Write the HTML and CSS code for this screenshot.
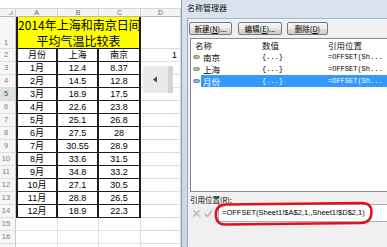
FILE: index.html
```html
<!DOCTYPE html>
<html>
<head>
<meta charset="utf-8">
<link rel="stylesheet" href="styles.css">
</head>
<body>
<div class="screen">
  <div class="sheet">
    <div class="topbar"></div>
    <div class="grid">
      <div class="corner"><span class="tri"></span></div>
      <div class="colh">A</div><div class="colh">B</div><div class="colh">C</div><div class="colh">D</div>

      <div class="rowh r1">1</div>
      <div class="title">2014年上海和南京日间<br>平均气温比较表</div>
      <div class="dcell"></div>

      <div class="rowh">2</div><div class="c a">月份</div><div class="c">上海</div><div class="c">南京</div><div class="dcell num">1</div>
      <div class="rowh">3</div><div class="c a">1月</div><div class="c">12.4</div><div class="c">8.37</div><div class="dcell"></div>
      <div class="rowh">4</div><div class="c a">2月</div><div class="c">14.5</div><div class="c">12.8</div><div class="dcell"></div>
      <div class="rowh act">5</div><div class="c a">3月</div><div class="c">18.9</div><div class="c">17.5</div><div class="dcell"></div>
      <div class="rowh">6</div><div class="c a">4月</div><div class="c">22.6</div><div class="c">23.8</div><div class="dcell"></div>
      <div class="rowh">7</div><div class="c a">5月</div><div class="c">25.1</div><div class="c">26.8</div><div class="dcell"></div>
      <div class="rowh">8</div><div class="c a">6月</div><div class="c">27.5</div><div class="c">28</div><div class="dcell"></div>
      <div class="rowh">9</div><div class="c a">7月</div><div class="c">30.55</div><div class="c">28.9</div><div class="dcell"></div>
      <div class="rowh">10</div><div class="c a">8月</div><div class="c">33.6</div><div class="c">31.5</div><div class="dcell"></div>
      <div class="rowh">11</div><div class="c a">9月</div><div class="c">34.8</div><div class="c">33.2</div><div class="dcell"></div>
      <div class="rowh">12</div><div class="c a">10月</div><div class="c">27.1</div><div class="c">30.5</div><div class="dcell"></div>
      <div class="rowh">13</div><div class="c a">11月</div><div class="c">28.8</div><div class="c">26.5</div><div class="dcell"></div>
      <div class="rowh">14</div><div class="c a">12月</div><div class="c">18.9</div><div class="c">22.3</div><div class="dcell"></div>
      <div class="rowh">15</div><div class="e"></div><div class="e"></div><div class="e"></div><div class="dcell"></div>
      <div class="rowh">16</div><div class="e"></div><div class="e"></div><div class="e"></div><div class="dcell"></div>
      <div class="rowh">17</div><div class="e"></div><div class="e"></div><div class="e"></div><div class="dcell"></div>
    </div>
    <div class="scrollbox">
      <svg width="6" height="7" viewBox="0 0 6 7"><path d="M5 0.5 L1 3.5 L5 6.5 Z" fill="#444"/></svg>
    </div>
  </div>

  <div class="dialog">
    <div class="titlebar">名称管理器</div>
    <div class="body">
      <div class="btns">
        <div class="btn b1">新建(<u>N</u>)...</div>
        <div class="btn b2">编辑(<u>E</u>)...</div>
        <div class="btn b3">删除(<u>D</u>)</div>
      </div>
      <div class="list">
        <div class="lhead"><span class="hn">名称</span><span class="hv">数值</span><span class="hr">引用位置</span></div>
        <div class="lrow"><span class="ic"><i></i></span><span class="cells"><span class="nm">南京</span><span class="val">{...}</span><span class="ref">=OFFSET(Sh...</span></span></div>
        <div class="lrow"><span class="ic"><i></i></span><span class="cells"><span class="nm">上海</span><span class="val">{...}</span><span class="ref">=OFFSET(Sh...</span></span></div>
        <div class="lrow sel"><span class="ic"><i></i></span><span class="cells"><span class="nm">月份</span><span class="val">{...}</span><span class="ref">=OFFSET(Sh...</span></span></div>
      </div>
      <div class="reflabel">引用位置(<u>R</u>):</div>
      <div class="refrow">
        <span class="ib">
          <svg width="11" height="11" viewBox="0 0 11 11"><path d="M2.5 2.5 L8.5 8.5 M8.5 2.5 L2.5 8.5" stroke="#b4b4b4" stroke-width="1.3" fill="none"/></svg>
        </span>
        <span class="ib">
          <svg width="11" height="11" viewBox="0 0 11 11"><path d="M2 6 L4.5 8.5 L9 2.5" stroke="#b4b4b4" stroke-width="1.3" fill="none"/></svg>
        </span>
        <div class="input">=OFFSET(Sheet1!$A$2,1,,Sheet1!$D$2,1)</div>
        <svg class="mark" width="162" height="26" viewBox="0 0 162 26"><path d="M12 3.5 L148 2 Q157.5 2 157.5 11 Q157.5 21.5 147 22 L11 23.5 Q1.8 23.5 1.8 13.5 Q1.8 4 12 3.5 Z" fill="none" stroke="#e0101c" stroke-width="2.4"/></svg>
      </div>
    </div>
  </div>
</div>
</body>
</html>
```
FILE: styles.css
```css
* { box-sizing: border-box; margin: 0; padding: 0; }
html, body { width: 387px; height: 247px; overflow: hidden; background: #fff; }
body { font-family: "Noto Sans CJK SC", sans-serif; color: #000; }

.screen { display: flex; height: 247px; }

/* spreadsheet */
.sheet { position: relative; width: 181px; flex: none; overflow: hidden; }
.topbar { height: 9px; border-bottom: 1px solid #d6d6d6; background: #fff; }
.grid {
  display: grid;
  grid-template-columns: 16px 42px 41px 42px 40px;
  grid-template-rows: 8px 32px;
  grid-auto-rows: 13px;
}
.corner { position: relative; background: #f4f4f4; border-right: 1px solid #cfcfcf; border-bottom: 1px solid #b8b8b8; }
.tri { position: absolute; right: 2px; bottom: 1px; width: 0; height: 0; border-left: 5px solid transparent; border-bottom: 5px solid #c4c4c4; }
.colh {
  background: #f4f4f4; border-right: 1px solid #d2d2d2; border-bottom: 1px solid #b8b8b8;
  font: 7px/7px "Liberation Sans", sans-serif; color: #666; text-align: center;
}
.rowh {
  background: #f6f6f6; border-right: 1px solid #c9c9c9; border-bottom: 1px solid #dedede;
  font: 7.5px/12px "Liberation Sans", sans-serif; color: #7a7a7a; text-align: center; padding-right: 3px;
}
.rowh.r1 { display: flex; align-items: flex-end; justify-content: center; padding-bottom: 1px; line-height: 9px; }
.rowh.act { color: #217346; background: #e1e1e1; }
.title {
  grid-column: span 3; background: #ffff00;
  border-left: 2px solid #1c1c1c; border-right: 2px solid #1c1c1c; border-bottom: 1px solid #1c1c1c;
  font-size: 12px; line-height: 15.5px; text-align: center; white-space: nowrap; overflow: hidden;
}
.c {
  border-right: 2px solid #1c1c1c; border-bottom: 1px solid #1c1c1c;
  font: 9px/12px "Liberation Sans", "Noto Sans CJK SC", sans-serif; text-align: center; white-space: nowrap;
}
.c.a { border-left: 2px solid #1c1c1c; }
.e { border-right: 1px solid #e0e0e0; border-bottom: 1px solid #e0e0e0; }
.dcell { border-right: 1px solid #dcdcdc; border-bottom: 1px solid #dcdcdc; font: 9px/12px "Liberation Sans", sans-serif; }
.dcell.num { text-align: right; padding-right: 3px; }

.scrollbox {
  position: absolute; left: 143px; top: 66px; width: 30px; height: 27px;
  background: #e9e9e9; border-right: 5px solid #d4d4d4;
  display: flex; align-items: center; justify-content: center; padding-right: 2px;
}

/* dialog */
.dialog {
  width: 206px; flex: none; display: flex; flex-direction: column; overflow: hidden;
  background: linear-gradient(#d9e3ee, #c8d5e4);
  border-left: 1px solid #8b9cb1; padding-left: 5px;
}
.titlebar { height: 18px; flex: none; font-size: 8px; line-height: 15px; padding-left: 0; color: #111; white-space: nowrap; }
.body {
  position: relative; flex: 1; background: #f0f0f0;
  border-left: 1px solid #9aabc0; border-top: 1px solid #a9b8ca;
  padding: 3px 0 0 1px; overflow: hidden;
}
.btns { display: flex; height: 13px; }
.btn {
  height: 13px; border: 1px solid #7a7a7a; border-radius: 2px;
  background: linear-gradient(#f6f6f6, #e9e9e9 50%, #dcdcdc 50%, #d0d0d0);
  font-size: 7.5px; line-height: 11px; text-align: center; white-space: nowrap;
}
.btn u { text-decoration: underline; }
.b1 { width: 43px; }
.b2 { width: 44px; margin-left: 6px; }
.b3 { width: 41px; margin-left: 5px; }

.list {
  margin: 3px 0 0 1px; width: 240px; height: 154px; background: #fff;
  border: 1px solid #828790;
}
.lhead { display: flex; height: 12px; font-size: 8.5px; line-height: 12px; color: #111; white-space: nowrap; }
.hn { width: 71px; padding-left: 4px; }
.hv { width: 66px; }
.lrow { display: flex; height: 12px; white-space: nowrap; }
.ic { width: 10px; display: flex; align-items: center; justify-content: center; }
.ic i { display: block; width: 7px; height: 4px; border-radius: 2px; background: #aebb98; border: 1px solid #8f9c7c; }
.sel .ic i { background: #8fb0d2; border-color: #6f8fb4; }
.cells { display: flex; flex: 1; align-items: center; }
.sel .cells { background: #3399ff; color: #fff; }
.nm { width: 61px; padding-left: 2px; font-size: 8.5px; line-height: 12px; }
.val { width: 66px; font: 7px/12px "Liberation Mono", monospace; }
.ref { font: 7px/12px "Liberation Mono", monospace; }

.reflabel { margin: 3px 0 0 1px; height: 9px; font-size: 7.5px; line-height: 9px; white-space: nowrap; }
.reflabel u { text-decoration: underline; }
.refrow { position: relative; display: flex; align-items: center; height: 18px; }
.ib { width: 11px; height: 11px; margin-left: 2px; display: block; background: #ececec; }
.ib + .ib { margin-left: 1px; }
.ib svg { display: block; }
.input {
  margin-left: 4px; flex: 1; height: 18px; background: #fff;
  border: 1px solid #abadb3; border-right: none; padding-left: 3px;
  font: 7.5px/16px "Liberation Sans", sans-serif; white-space: nowrap; overflow: hidden;
}
.mark { position: absolute; left: 25px; top: -3px; }
```
